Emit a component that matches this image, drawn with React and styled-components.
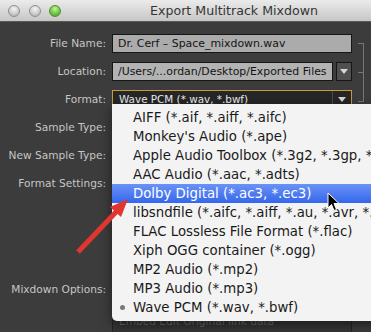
import styled, { createGlobalStyle } from 'styled-components'

const Color = {
  Panel: '#3c3c3c',
  Label: '#c6c6c6',
  FieldGray: '#ababab',
  FieldBorder: '#161616',
  Gold: '#c99a3a',
  MenuBg: '#f3f3f3',
  MenuText: '#1a1a1a',
  Red: '#e0362f'
}

const GlobalStyle = createGlobalStyle`
  html, body {
    margin: 0;
    padding: 0;
    overflow: hidden;
    background: ${Color.Panel};
  }
`

const Window = styled.div`
  position: relative;
  width: 468px;
  height: 332px;
  overflow: hidden;
  background: ${Color.Panel};
  font-family: 'DejaVu Sans', 'Lucida Grande', sans-serif;
`

const TitleBar = styled.header`
  display: grid;
  align-items: center;
  height: 22px;
  background: linear-gradient(#ebebeb, #c6c6c6);
  border-bottom: 1px solid #5a5a5a;
  box-sizing: border-box;
`

const Lights = styled.div`
  grid-area: 1 / 1;
  justify-self: start;
  display: flex;
  gap: 8.5px;
  padding: 1px 0 0 8px;
`

const Light = styled.span`
  width: 12px;
  height: 12px;
  border-radius: 50%;
  box-sizing: border-box;
  border: 1px solid ${p => (p.$green ? '#4d8f34' : '#8f8f8f')};
  background: ${p =>
    p.$green
      ? 'radial-gradient(circle at 50% 30%, #c8f2a4 0, #7dcf4f 45%, #3f9a25 100%)'
      : 'radial-gradient(circle at 50% 30%, #f4f4f4 0, #d2d2d2 50%, #a9a9a9 100%)'};
`

const Title = styled.h1`
  grid-area: 1 / 1;
  justify-self: center;
  margin: 0;
  font-size: 12.6px;
  font-weight: normal;
  color: #353535;
`

const Form = styled.div`
  display: grid;
  grid-template-columns: 106px 240px 6px;
  grid-template-rows: 19px 19px 19px 19px 19px 97px 60px;
  column-gap: 6px;
  row-gap: 9px;
  padding-top: 11.5px;
`

const Label = styled.label`
  grid-column: 1;
  justify-self: end;
  align-self: start;
  font-size: 10.6px;
  line-height: 19px;
  color: ${Color.Label};
  white-space: nowrap;
`

const TextField = styled.div`
  flex: 1;
  box-sizing: border-box;
  height: 19px;
  padding-left: 5px;
  border: 1px solid ${Color.FieldBorder};
  background: ${p => (p.$light ? '#b3b3b3' : Color.FieldGray)};
  color: #141414;
  font-size: 10.9px;
  line-height: 17px;
  white-space: nowrap;
  overflow: hidden;
`

const Combo = styled.div`
  display: flex;
  gap: 3px;
`

const DropButton = styled.div`
  display: flex;
  align-items: center;
  justify-content: center;
  width: 16px;
  box-sizing: border-box;
  border: 1px solid ${Color.FieldBorder};
  background: #505050;
`

const Triangle = styled.span`
  width: 0;
  height: 0;
  border-left: 4px solid transparent;
  border-right: 4px solid transparent;
  border-top: 5px solid #d6d6d6;
`

const Select = styled.div`
  display: flex;
  box-sizing: border-box;
  height: 19px;
  border: 1px solid ${Color.Gold};
  background: #262626;
  color: #ececec;
  font-size: 10.4px;
  line-height: 17px;
`

const SelectValue = styled.span`
  flex: 1;
  padding-left: 6px;
  border-right: 1px solid #4a4a4a;
`

const SelectArrow = styled.span`
  display: flex;
  align-items: center;
  justify-content: center;
  width: 18px;
`

const Bracket = styled.div`
  grid-column: 3;
  grid-row: 1 / 4;
  margin: 9.5px 0 7px;
  border: 1px solid #777;
  border-left: none;
  background: linear-gradient(#777, #777) left center / 100% 1px no-repeat;
`

const DarkField = styled.div`
  grid-column: 2;
  box-sizing: border-box;
  border: 1px solid #222;
  background: #333;
`

const OptionBox = styled.div`
  grid-column: 2;
  display: flex;
  flex-direction: column;
  box-sizing: border-box;
  border: 1px solid #242424;
  background: #363636;
  padding: 0 0 0 6px;
`

const OptionRow = styled.div`
  height: 16px;
  line-height: 16px;
  font-size: 10.6px;
  color: #6a6a6a;
  white-space: nowrap;
`

const Menu = styled.ul`
  position: absolute;
  left: 112px;
  top: 104px;
  width: 300px;
  margin: 0;
  padding: 4px 0;
  list-style: none;
  background: ${Color.MenuBg};
  border-radius: 0 0 5px 5px;
  box-shadow: 0 4px 12px rgba(0, 0, 0, 0.5);
`

const MenuItem = styled.li`
  position: relative;
  height: 19px;
  padding-left: 21px;
  font-size: 13.3px;
  line-height: 19px;
  white-space: nowrap;
  color: ${p => (p.$selected ? '#fff' : Color.MenuText)};
  background: ${p => (p.$selected ? 'linear-gradient(#6a93f6, #3566ec)' : 'transparent')};

  &::before {
    content: '';
    display: ${p => (p.$checked ? 'block' : 'none')};
    position: absolute;
    left: 8px;
    top: 7px;
    width: 5px;
    height: 5px;
    border-radius: 50%;
    background: #7a7a7a;
  }
`

const ArrowOverlay = styled.svg`
  position: absolute;
  left: 0;
  top: 0;
  pointer-events: none;
`

const Cursor = styled.svg`
  position: absolute;
  left: 327px;
  top: 192px;
`

const formats = [
  'AIFF (*.aif, *.aiff, *.aifc)',
  "Monkey's Audio (*.ape)",
  'Apple Audio Toolbox (*.3g2, *.3gp, *.aac, *.adts)',
  'AAC Audio (*.aac, *.adts)',
  'Dolby Digital (*.ac3, *.ec3)',
  'libsndfile (*.aifc, *.aiff, *.au, *.avr, *.caf)',
  'FLAC Lossless File Format (*.flac)',
  'Xiph OGG container (*.ogg)',
  'MP2 Audio (*.mp2)',
  'MP3 Audio (*.mp3)',
  'Wave PCM (*.wav, *.bwf)'
]

function App() {
  return (
    <Window>
      <GlobalStyle />
      <TitleBar>
        <Lights>
          <Light />
          <Light />
          <Light $green />
        </Lights>
        <Title>Export Multitrack Mixdown</Title>
      </TitleBar>

      <Form>
        <Label>File Name:</Label>
        <TextField>Dr. Cerf – Space_mixdown.wav</TextField>
        <Bracket />

        <Label>Location:</Label>
        <Combo>
          <TextField $light>/Users/...ordan/Desktop/Exported Files</TextField>
          <DropButton><Triangle /></DropButton>
        </Combo>

        <Label>Format:</Label>
        <Select>
          <SelectValue>Wave PCM (*.wav, *.bwf)</SelectValue>
          <SelectArrow><Triangle /></SelectArrow>
        </Select>

        <Label>Sample Type:</Label>
        <DarkField />

        <Label>New Sample Type:</Label>
        <DarkField />

        <Label>Format Settings:</Label>
        <DarkField />

        <Label>Mixdown Options:</Label>
        <OptionBox>
          <OptionRow />
          <OptionRow />
          <OptionRow>Embed Edit Original link data</OptionRow>
        </OptionBox>
      </Form>

      <Menu>
        {formats.map((name, i) => (
          <MenuItem key={name} $selected={i === 4} $checked={i === formats.length - 1}>
            {name}
          </MenuItem>
        ))}
      </Menu>

      <ArrowOverlay width="140" height="332" viewBox="0 0 140 332">
        <line x1="78" y1="252" x2="117" y2="211" stroke={Color.Red} strokeWidth="5" />
        <polygon points="128,199 121,217 110,207" fill={Color.Red} />
      </ArrowOverlay>

      <Cursor width="13" height="20" viewBox="0 0 13 20">
        <path
          d="M1 1 L1 16 L4.5 12.5 L7 18.5 L9.5 17.5 L7 11.5 L12 11.5 Z"
          fill="#000"
          stroke="#fff"
          strokeWidth="1"
          strokeLinejoin="round"
        />
      </Cursor>
    </Window>
  )
}

export default App
